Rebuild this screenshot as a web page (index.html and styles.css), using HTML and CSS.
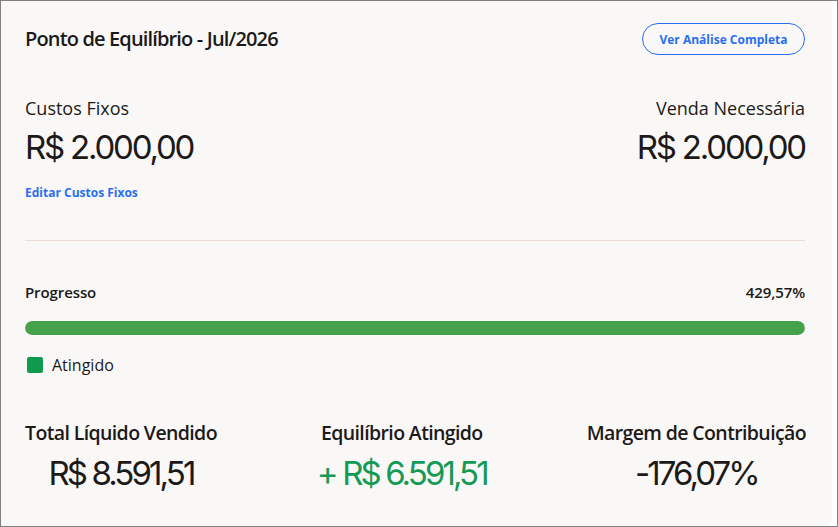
FILE: index.html
```html
<!DOCTYPE html>
<html lang="pt-BR">
<head>
<meta charset="utf-8">
<title>Ponto de Equilíbrio</title>
<link rel="stylesheet" href="styles.css">
</head>
<body>
<div class="frame">
  <div class="card">
    <div class="header">
      <h1 class="title">Ponto de Equilíbrio - Jul/2026</h1>
      <button class="btn-outline">Ver Análise Completa</button>
    </div>

    <div class="summary">
      <div class="summary-col">
        <div class="label">Custos Fixos</div>
        <div class="amount">R$ 2.000,00</div>
        <a class="link" href="#">Editar Custos Fixos</a>
      </div>
      <div class="summary-col right">
        <div class="label">Venda Necessária</div>
        <div class="amount">R$ 2.000,00</div>
      </div>
    </div>

    <hr class="divider">

    <div class="progress-head">
      <span>Progresso</span>
      <span>429,57%</span>
    </div>
    <div class="bar"><div class="bar-fill" style="width:100%"></div></div>
    <div class="legend">
      <span class="swatch"></span>
      <span class="legend-text">Atingido</span>
    </div>

    <div class="stats">
      <div class="stat">
        <div class="stat-label">Total Líquido Vendido</div>
        <div class="stat-value">R$ 8.591,51</div>
      </div>
      <div class="stat">
        <div class="stat-label">Equilíbrio Atingido</div>
        <div class="stat-value positive">+ R$ 6.591,51</div>
      </div>
      <div class="stat">
        <div class="stat-label">Margem de Contribuição</div>
        <div class="stat-value">-176,07%</div>
      </div>
    </div>
  </div>
</div>
</body>
</html>
```

FILE: styles.css
```css
* { box-sizing: border-box; }
html, body { margin: 0; padding: 0; }
body {
  width: 838px;
  height: 527px;
  font-family: "Open Sans", "Noto Sans", sans-serif;
  color: #1c1a19;
  background: #ffffff;
}
.frame {
  width: 838px;
  height: 527px;
  border: 1px solid #808080;
  background: #ffffff;
  display: flex;
}
.card {
  width: 831px;
  height: 525px;
  background: #faf8f6;
  border-radius: 0 0 8px 0;
  padding: 22px 27px 0 24px;
  display: flex;
  flex-direction: column;
}
.card > * { flex-shrink: 0; }
.header {
  display: flex;
  justify-content: space-between;
  align-items: center;
  height: 32px;
}
.title {
  margin: 0;
  font-size: 20px;
  font-weight: 600;
  letter-spacing: -0.85px;
  line-height: 32px;
}
.btn-outline {
  height: 32px;
  width: 163px;
  border: 1.5px solid #2a6ef0;
  border-radius: 16px;
  background: transparent;
  color: #2a6ef0;
  font-family: "Open Sans", sans-serif;
  font-weight: 700;
  font-size: 12px;
  padding: 0;
}
.summary {
  display: flex;
  justify-content: space-between;
  margin-top: 41px;
}
.summary-col { display: flex; flex-direction: column; align-items: flex-start; }
.summary-col.right { align-items: flex-end; }
.label {
  font-size: 18px;
  line-height: 24px;
}
.amount, .stat-value {
  font-family: "Inter", "Liberation Sans", sans-serif;
  font-size: 33px;
  line-height: 40px;
  letter-spacing: -2.2px;
  white-space: nowrap;
}
.amount { margin-top: 7px; }
.link {
  margin-top: 18px;
  font-size: 12px;
  font-weight: 700;
  line-height: 16px;
  color: #2a6ef0;
  text-decoration: none;
}
.divider {
  margin: 39px 0 0 0;
  border: none;
  border-top: 1px solid #ecdcd4;
  height: 0;
}
.progress-head {
  margin-top: 41px;
  display: flex;
  justify-content: space-between;
  font-size: 15px;
  font-weight: 600;
  line-height: 20px;
  letter-spacing: -0.1px;
}
.bar {
  margin-top: 19px;
  height: 14px;
  background: #e8ddd6;
  border-radius: 7px;
  overflow: hidden;
}
.bar-fill {
  height: 100%;
  background: #43a24a;
  border-radius: 7px;
}
.legend {
  margin-top: 20px;
  display: flex;
  align-items: center;
  gap: 9px;
  padding-left: 2px;
}
.swatch {
  width: 16px;
  height: 16px;
  border-radius: 2px;
  background: #0f9a50;
}
.legend-text {
  font-size: 16px;
  line-height: 20px;
}
.stats {
  margin-top: 45px;
  display: flex;
  justify-content: space-between;
  margin-right: -1px;
}
.stat { display: flex; flex-direction: column; align-items: center; }
.stat-label {
  font-size: 19.5px;
  font-weight: 600;
  line-height: 26px;
  letter-spacing: -0.62px;
  white-space: nowrap;
}
.stat-value {
  margin-top: 7px;
  letter-spacing: -2.9px;
}
.stat-value.positive { color: #159a55; }
```
